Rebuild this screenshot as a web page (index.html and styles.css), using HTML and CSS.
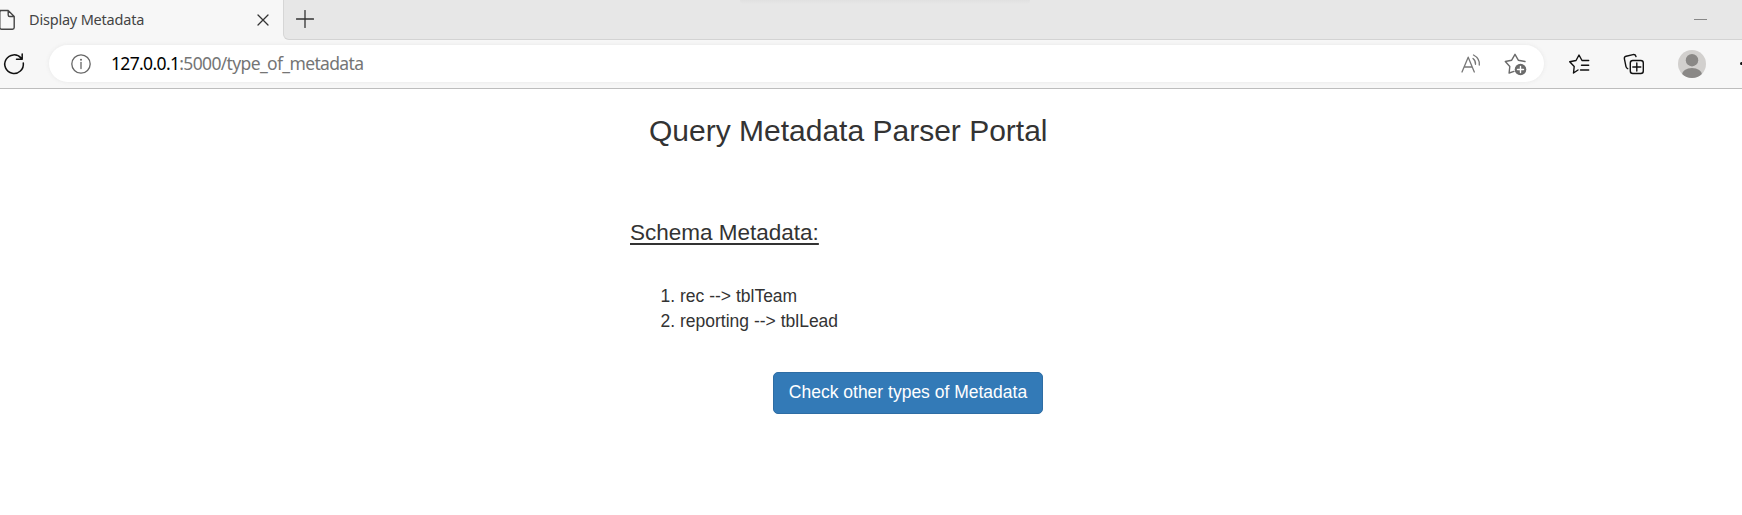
FILE: index.html
```html
<!DOCTYPE html>
<html lang="en">
<head>
<meta charset="utf-8">
<title>Display Metadata</title>
<link rel="stylesheet" href="styles.css">
</head>
<body>
<header class="browser">
  <div class="tabstrip">
    <div class="tab">
      <svg class="doc" width="16" height="22" viewBox="0 0 16 22"><path d="M-3 1.5H8.2L14.2 7.5V18.5Q14.2 20.2 12.5 20.2H1.5Q-.2 20.2-.2 18.5V3Q-.2 1.5 1.3 1.5M8.2 1.5V6Q8.2 7.5 9.7 7.5H14.2"/></svg>
      <span class="tab-title">Display Metadata</span>
      <svg class="close" width="12" height="12" viewBox="0 0 12 12"><path d="M1 1L11 11M11 1L1 11"/></svg>
    </div>
    <svg class="plus" width="18" height="18" viewBox="0 0 18 18"><path d="M9 .5V17.5M.5 9H17.5"/></svg>
    <span class="minimize"></span>
    <span class="top-shadow"></span>
  </div>
  <div class="toolbar">
    <svg class="reload" width="24" height="24" viewBox="0 0 24 24"><path d="M19.2 6.2A9.3 9.3 0 1 0 21.3 11M20.2 2V7.2H14.5"/></svg>
    <div class="address">
      <svg class="info" width="22" height="22" viewBox="0 0 22 22"><circle cx="11" cy="11" r="9.2"/><path d="M11 9.5V15.5"/><circle class="dot" cx="11" cy="6.8" r="1"/></svg>
      <span class="url"><b>127.0.0.1</b>:5000/type_of_metadata</span>
      <svg class="read" width="21" height="20" viewBox="0 0 21 20"><path d="M1 18L7.2 3.2L13.3 18M3.2 13H11.2M12 4.5Q14.8 6.8 14.5 10.3M12.5 1Q19 4.5 18.3 11"/></svg>
      <svg class="addfav" width="24" height="24" viewBox="0 0 24 24"><path d="M10 19.4L5.1 21L5.8 14.5L1.3 9.5L7.7 8.2L11 2.3L14.3 8.2L21 9.5"/><circle class="badge" cx="16.5" cy="17.5" r="5.8"/><path class="cross" d="M16.5 14.5V20.5M13.5 17.5H19.5"/></svg>
    </div>
    <svg class="favorites" width="22" height="22" viewBox="0 0 22 22"><path d="M10 17L5.5 20L6.2 13.5L1.7 8.7L8 7.5L11 2L14 7.5H20.7M13.5 12.2H20.7M12.5 17H20.7"/></svg>
    <svg class="collections" width="22" height="22" viewBox="0 0 22 22"><path d="M4.7 15.7Q3.4 15.2 3 13.6L1.4 5.9Q1 3.8 3.1 3.2L10 1.6Q12.3 1.2 13 3.5"/><rect x="7.3" y="7.5" width="13" height="13" rx="2.5"/><path d="M13.8 10V18M9.8 14H17.8"/></svg>
    <svg class="avatar" width="28" height="28" viewBox="0 0 28 28"><defs><clipPath id="avatar-clip"><circle cx="14" cy="14" r="14"/></clipPath></defs><circle cx="14" cy="14" r="14" fill="#d2d0ce"/><g clip-path="url(#avatar-clip)" fill="#8a8886"><circle cx="14" cy="10.2" r="6.2"/><ellipse cx="14" cy="25" rx="10.2" ry="7"/></g></svg>
    <span class="more"></span>
  </div>
</header>
<main class="page">
  <h3 class="heading">Query Metadata Parser Portal</h3>
  <section class="content">
    <h4 class="subheading">Schema Metadata:</h4>
    <ol class="schemas">
      <li>rec --&gt; tblTeam</li>
      <li>reporting --&gt; tblLead</li>
    </ol>
    <button class="btn">Check other types of Metadata</button>
  </section>
</main>
</body>
</html>
```
FILE: styles.css
```css
* { box-sizing: border-box; }
body { margin: 0; width: 1742px; height: 515px; overflow: hidden; background: #fff; color: #333; font-family: "Liberation Sans", Arial, sans-serif; }
svg { display: block; flex: none; fill: none; stroke-linecap: round; stroke-linejoin: round; }

.browser { height: 89px; background: #f7f7f7; border-bottom: 1px solid #bdbdbd; font-family: "Noto Sans", "Open Sans", sans-serif; }
.tabstrip { position: relative; height: 40px; display: flex; background: #f7f7f7; }
.tabstrip::after { content: ""; box-sizing: border-box; position: absolute; left: 283px; right: 0; top: 0; height: 40px; background: #e7e7e7; border-bottom: 1px solid #d3d3d3; border-left: 1px solid #d6d6d6; border-bottom-left-radius: 6px; }
.tab { width: 283px; display: flex; align-items: center; }
.doc { stroke: #444; stroke-width: 1.4; }
.tab-title { margin-left: 13px; padding-bottom: 2px; width: 115px; font-size: 14.5px; line-height: 20px; letter-spacing: -0.2px; color: #444; white-space: nowrap; }
.close { margin-left: 113px; stroke: #333; stroke-width: 1.3; }
.plus { position: relative; z-index: 1; margin: 10px 0 0 13px; stroke: #333; stroke-width: 1.3; }
.minimize { position: relative; z-index: 1; width: 13px; height: 1px; margin: 19px 35px 0 auto; background: #888; }
.top-shadow { position: absolute; z-index: 1; left: 740px; top: 0; width: 290px; height: 4px; background: linear-gradient(#e1e1e1, #e7e7e7); border-radius: 0 0 6px 6px; }

.toolbar { height: 47px; display: flex; align-items: center; }
.reload { margin-left: 2px; stroke: #111; stroke-width: 1.5; }
.address { width: 1495px; height: 37px; margin-left: 23px; padding-left: 21px; display: flex; align-items: center; background: #fff; border-radius: 19px; box-shadow: 0 0 4px #e7e7e7; }
.info { stroke: #666; stroke-width: 1.3; }
.info .dot { fill: #666; stroke: none; }
.url { margin-left: 19px; padding-bottom: 2px; width: 260px; font-size: 17.5px; line-height: 24px; letter-spacing: -0.65px; color: #757575; white-space: nowrap; }
.url b { font-weight: 400; color: #000; }
.read { margin-left: 1090px; stroke: #777; stroke-width: 1.3; }
.addfav { margin-left: 22px; stroke: #6b6b6b; stroke-width: 1.4; }
.addfav .badge { fill: #6b6b6b; stroke: none; }
.addfav .cross { stroke: #fff; }
.favorites { margin-left: 24px; stroke: #111; stroke-width: 1.4; }
.collections { margin-left: 33px; stroke: #111; stroke-width: 1.4; }
.avatar { margin-left: 33px; }
.more { width: 3px; height: 3px; margin-left: auto; margin-right: -1px; border-radius: 50%; background: #111; }

.page { padding-left: 630px; }
.heading { margin: 25px 0 0 19px; font-size: 30px; line-height: 33px; font-weight: 400; white-space: nowrap; }
.content { margin-top: 73px; }
.subheading { margin: 0; font-size: 22.5px; line-height: 25px; font-weight: 400; text-decoration: underline; text-decoration-thickness: 2px; text-underline-offset: 3px; }
.schemas { margin: 39px 0 0; padding-left: 50px; font-size: 17.5px; line-height: 25px; }
.btn { display: flex; align-items: center; justify-content: center; width: 270px; height: 42px; margin: 38px 0 0 143px; padding: 0 0 2px; border: 1px solid #2e6da4; border-radius: 5px; background: #337ab7; color: #fff; font: 17.5px/25px "Liberation Sans", Arial, sans-serif; white-space: nowrap; }
```
